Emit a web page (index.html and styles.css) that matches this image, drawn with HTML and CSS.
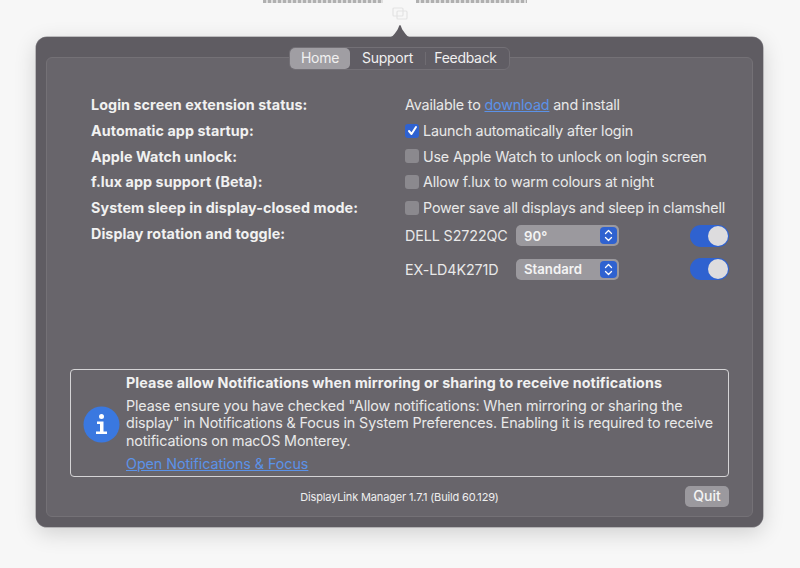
FILE: index.html
```html
<!DOCTYPE html>
<html lang="en">
<head>
<meta charset="utf-8">
<title>DisplayLink Manager</title>
<link rel="stylesheet" href="styles.css">
</head>
<body>
<div class="menubar">
  <span class="blur-text blur-left"></span>
  <span class="blur-text blur-right"></span>
</div>
<svg class="menu-icon" width="16" height="13" viewBox="0 0 16 13" fill="none" stroke="#d0d0d0" stroke-width="1.2"><rect x="1" y="1" width="10" height="8" rx="1"/><rect x="5" y="4" width="10" height="8" rx="1"/></svg>
<main class="popover">
  <svg class="arrow" width="28" height="14" viewBox="0 0 28 14"><path d="M0 14C6 14 8 11 11 6.500C12.500 4.500 13 1 14 1C15 1 15.500 4.500 17 6.500C20 11 22 14 28 14Z" fill="#5f5c62"/></svg>
  <nav class="tabs">
    <span class="tab tab-active">Home</span>
    <span class="tab tab-support">Support</span>
    <span class="tab-sep"></span>
    <span class="tab tab-feedback">Feedback</span>
  </nav>
  <section class="panel">
    <div class="settings">
      <div class="label">Login screen extension status:</div>
      <div class="value">Available to <a class="link" href="#">download</a> and install</div>

      <div class="label">Automatic app startup:</div>
      <div class="value check-row"><span class="check check-on"><svg width="11" height="11" viewBox="0 0 11 11" fill="none" stroke="#fff" stroke-width="2" stroke-linecap="round" stroke-linejoin="round"><path d="M2 6l2.500 3L9 2"/></svg></span>Launch automatically after login</div>

      <div class="label">Apple Watch unlock:</div>
      <div class="value check-row"><span class="check"></span>Use Apple Watch to unlock on login screen</div>

      <div class="label">f.lux app support (Beta):</div>
      <div class="value check-row"><span class="check"></span>Allow f.lux to warm colours at night</div>

      <div class="label">System sleep in display-closed mode:</div>
      <div class="value check-row"><span class="check"></span>Power save all displays and sleep in clamshell</div>

      <div class="label label-top">Display rotation and toggle:</div>
      <div class="displays">
        <div class="display">
          <span class="display-name">DELL S2722QC</span>
          <span class="select"><span class="select-text">90°</span><span class="stepper"><svg width="9" height="13" viewBox="0 0 9 13" fill="none" stroke="#fff" stroke-width="1.300" stroke-linecap="round" stroke-linejoin="round"><path d="M1.500 4.500L4.500 1.500L7.500 4.500M1.500 8.500L4.500 11.500L7.500 8.500"/></svg></span></span>
          <span class="toggle"><span class="knob"></span></span>
        </div>
        <div class="display">
          <span class="display-name">EX-LD4K271D</span>
          <span class="select"><span class="select-text">Standard</span><span class="stepper"><svg width="9" height="13" viewBox="0 0 9 13" fill="none" stroke="#fff" stroke-width="1.300" stroke-linecap="round" stroke-linejoin="round"><path d="M1.500 4.500L4.500 1.500L7.500 4.500M1.500 8.500L4.500 11.500L7.500 8.500"/></svg></span></span>
          <span class="toggle"><span class="knob"></span></span>
        </div>
      </div>
    </div>

    <div class="notice">
      <svg class="info" width="37" height="37" viewBox="0 0 37 37"><circle cx="18.500" cy="18.500" r="18" fill="#3a78e0"/><circle cx="18.500" cy="10.500" r="2.500" fill="#fff"/><path d="M14 15.500h6.500v10H24v2.500H13v-2.500h4v-7.500h-3Z" fill="#fff"/></svg>
      <div class="notice-body">
        <div class="notice-title">Please allow Notifications when mirroring or sharing to receive notifications</div>
        <div class="notice-text">Please ensure you have checked "Allow notifications: When mirroring or sharing the display" in Notifications &amp; Focus in System Preferences. Enabling it is required to receive notifications on macOS Monterey.</div>
        <a class="link notice-link" href="#">Open Notifications &amp; Focus</a>
      </div>
    </div>

    <footer class="footer">
      <span class="version">DisplayLink Manager 1.7.1 (Build 60.129)</span>
      <span class="quit">Quit</span>
    </footer>
  </section>
</main>
</body>
</html>
```
FILE: styles.css
```css
* { box-sizing: border-box; }
html, body { margin: 0; height: 568px; overflow: hidden; }
body {
  position: relative;
  background: #f7f7f7;
  font-family: Inter, "Liberation Sans", sans-serif;
  font-size: 14px;
  color: #ececec;
}
.menubar { position: absolute; top: 0; left: 263px; display: flex; gap: 33px; }
.blur-text {
  display: block;
  height: 3px;
  background: repeating-linear-gradient(90deg, #b0b0b0 0 3px, #dedede 3px 5px);
  filter: blur(.7px);
}
.blur-left { width: 120px; }
.blur-right { width: 111px; }
.menu-icon { position: absolute; left: 392px; top: 7px; opacity: .5; filter: blur(.7px); }

.popover {
  position: relative;
  width: 727px;
  height: 490px;
  margin: 37px 0 0 36px;
  padding: 20px 10px 10px;
  background: #5f5c62;
  border-radius: 11px;
  box-shadow: 0 0 0 .5px #8b898e, 0 6px 22px rgba(0,0,0,.16);
}
.arrow { position: absolute; left: 350px; top: -13px; }
.tabs {
  position: absolute;
  z-index: 1;
  top: 10px;
  left: 253px;
  width: 221px;
  height: 23px;
  display: flex;
  align-items: center;
  background: #605d64;
  border: 1px solid #737076;
  border-radius: 6px;
  font-size: 14px;
  line-height: 20px;
  letter-spacing: -.25px;
  color: #f0f0f0;
}
.tab { display: block; height: 21px; text-align: center; }
.tab-active { width: 60px; background: #a09ea3; border-radius: 5px; }
.tab-support { width: 75px; }
.tab-sep { width: 1px; height: 13px; background: #6f6c72; }
.tab-feedback { flex: 1; padding-right: 4px; letter-spacing: -.3px; }

.panel {
  height: 460px;
  padding: 34px 23px 0 23px;
  background: #68656b;
  border: 1px solid #747176;
  border-radius: 6px;
  display: flex;
  flex-direction: column;
}
.settings {
  height: 277.500px;
  padding: 0 0 0 21px;
  display: grid;
  grid-template-columns: 314px 1fr;
  grid-auto-rows: 25.7px;
  align-items: center;
}
.label { font-weight: 700; font-size: 14.300px; letter-spacing: .08px; color: #f1f1f1; white-space: nowrap; }
.label-top { align-self: start; padding-top: 5px; }
.value { font-size: 14.300px; letter-spacing: -.16px; color: #e9e9e9; white-space: nowrap; }
.check-row { display: flex; align-items: center; gap: 4px; }
.check {
  width: 14px;
  height: 14px;
  background: #8b898e;
  border-radius: 3px;
  display: flex;
  align-items: center;
  justify-content: center;
}
.check-on { background: #2f62d0; }
.link { color: #5b92e8; text-decoration: underline; }

.displays { grid-row: span 2; display: flex; flex-direction: column; gap: 12.500px; align-self: start; padding-top: 5px; }
.display { display: flex; align-items: center; height: 21px; }
.display-name { width: 111px; font-size: 14.300px; letter-spacing: -.1px; color: #e9e9e9; }
.select {
  width: 103px;
  height: 21px;
  padding: 0 2px 0 8px;
  background: #9b999e;
  border-radius: 5px;
  display: flex;
  align-items: center;
  justify-content: space-between;
  font-size: 13.200px;
  font-weight: 600;
  color: #f4f4f4;
}
.stepper {
  width: 17px;
  height: 17px;
  background: #2f62d0;
  border-radius: 4px;
  display: flex;
  align-items: center;
  justify-content: center;
}
.toggle {
  margin-left: 71px;
  width: 39px;
  height: 22px;
  padding: 1px;
  background: #2f62d0;
  border-radius: 11px;
  display: flex;
  justify-content: flex-end;
}
.knob { width: 20px; height: 20px; border-radius: 50%; background: #dddcde; }

.notice {
  height: 109px;
  padding: 3px 10px 0 12px;
  display: flex;
  align-items: flex-start;
  gap: 6px;
  border: 1px solid #d5d4d6;
  border-radius: 4px;
}
.info { margin-top: 33px; flex: none; }
.notice-title { font-weight: 700; font-size: 14.300px; line-height: 20px; letter-spacing: .1px; color: #f1f1f1; white-space: nowrap; }
.notice-text { margin-top: 4px; width: 598px; font-size: 14.300px; line-height: 17.500px; letter-spacing: -.12px; color: #e9e9e9; }
.notice-link { display: block; margin-top: 5px; font-size: 14.300px; line-height: 20px; letter-spacing: -.05px; }

.footer {
  position: relative;
  height: 39px;
  display: flex;
  align-items: center;
  justify-content: center;
}
.version { font-size: 11px; letter-spacing: -.15px; color: #efefef; }
.quit {
  position: absolute;
  right: 0;
  top: 9px;
  width: 44px;
  height: 21px;
  background: #9b999e;
  border-radius: 5px;
  text-align: center;
  line-height: 20px;
  font-size: 14px;
  font-weight: 500;
  color: #f4f4f4;
}
```
